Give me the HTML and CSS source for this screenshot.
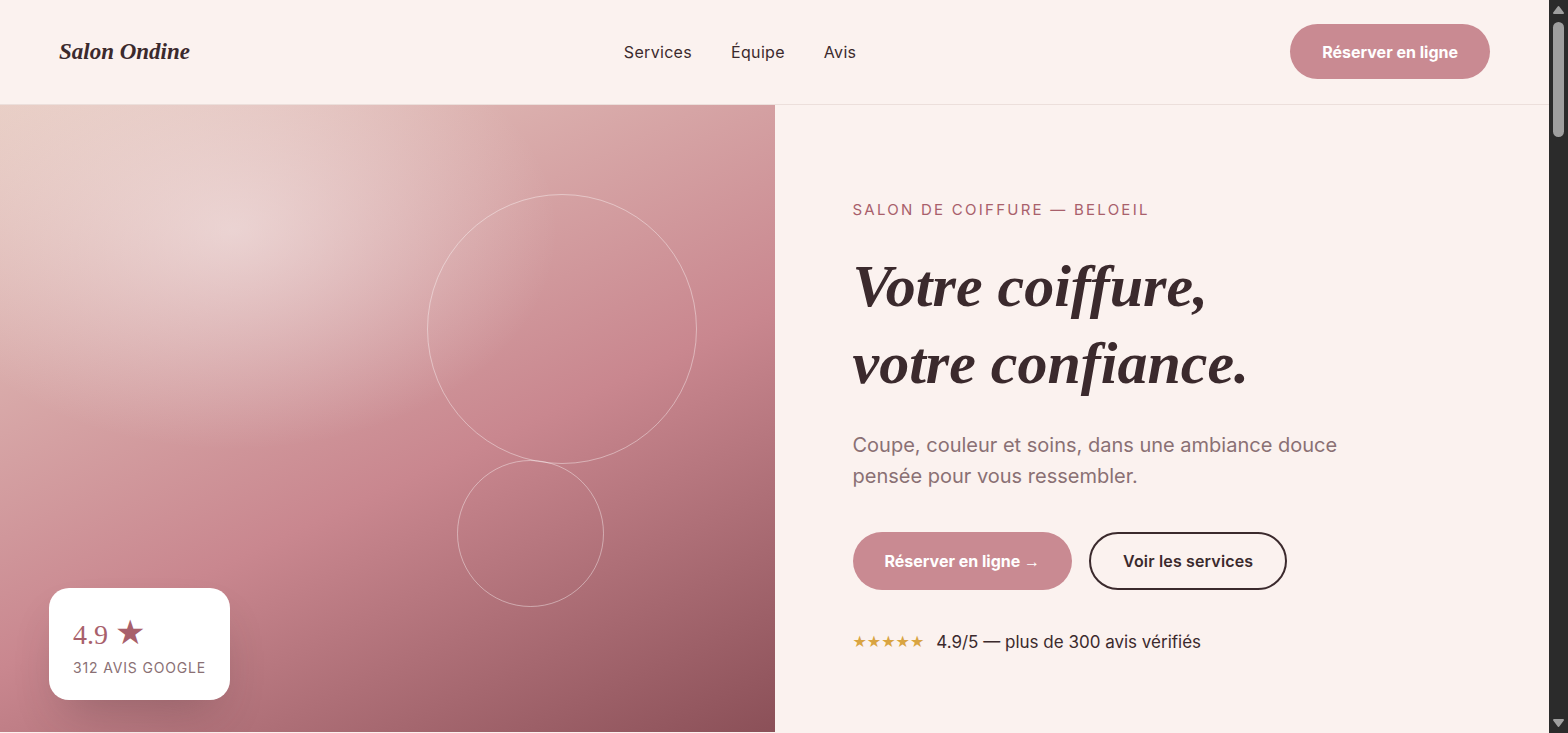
FILE: index.html
```html
<!DOCTYPE html>
<html lang="fr">
<head>
    <meta charset="UTF-8">
    <meta name="viewport" content="width=device-width, initial-scale=1.0">
    <title>Salon Ondine</title>
    <link rel="stylesheet" href="styles.css">
</head>
<body>

    <div class="page">
        <header class="header">
            <a href="#" class="logo">Salon Ondine</a>
            <nav class="nav">
                <a href="#services">Services</a>
                <a href="#equipe">Équipe</a>
                <a href="#avis">Avis</a>
            </nav>
            <button class="btn btn-primary btn-header">Réserver en ligne</button>
        </header>

        <main class="hero">
            <div class="visual">
                <span class="circle circle-big"></span>
                <span class="circle circle-small"></span>
                <div class="badge">
                    <div class="badge-note">4.9 <span class="badge-star">★</span></div>
                    <div class="badge-label">312 avis Google</div>
                </div>
            </div>

            <div class="content">
                <p class="eyebrow">Salon de coiffure — Beloeil</p>
                <h1>Votre coiffure,<br>votre confiance.</h1>
                <p class="lead">Coupe, couleur et soins, dans une ambiance douce pensée pour vous ressembler.</p>
                <div class="actions">
                    <button class="btn btn-primary">Réserver en ligne <span class="arrow">→</span></button>
                    <button class="btn btn-outline">Voir les services</button>
                </div>
                <div class="rating">
                    <span class="stars">★★★★★</span>
                    <span>4.9/5 — plus de 300 avis vérifiés</span>
                </div>
            </div>
        </main>
    </div>

    <div class="scrollbar">
        <svg width="13" height="10" viewBox="0 0 13 10"><path d="M6.5 2 11 8H2Z"/></svg>
        <div class="thumb"></div>
        <svg class="down" width="13" height="10" viewBox="0 0 13 10"><path d="M6.5 8 2 2H11Z"/></svg>
    </div>

</body>
</html>
```
FILE: styles.css
```css
* {
    box-sizing: border-box;
}
body {
    margin: 0;
    display: flex;
    min-height: 100vh;
    font-family: Inter, "Liberation Sans", sans-serif;
    font-size: 16px;
    color: #3b2a2d;
    background: #fbf2ef;
}
.page {
    flex: 1;
    display: flex;
    flex-direction: column;
}

/* Header */
.header {
    display: flex;
    justify-content: space-between;
    align-items: center;
    height: 105px;
    padding: 0 59px 1px;
    border-bottom: 1px solid #ecdfdb;
}
.logo {
    font-family: "Liberation Serif", serif;
    font-size: 23px;
    font-style: italic;
    font-weight: bold;
    color: #3b2a2d;
    text-decoration: none;
}
.nav {
    display: flex;
    gap: 39px;
}
.nav a {
    color: #3b2a2d;
    text-decoration: none;
    letter-spacing: 0.02em;
}

/* Buttons */
.btn {
    height: 58px;
    padding: 0 32px;
    border: none;
    border-radius: 29px;
    font-family: inherit;
    font-size: 16px;
    font-weight: 600;
    cursor: pointer;
}
.btn-primary {
    background: #c98a92;
    color: #fff;
    font-weight: 700;
}
.btn-header {
    height: 55px;
}
.btn-outline {
    background: none;
    border: 2px solid #3b2a2d;
    color: #3b2a2d;
    letter-spacing: 0.01em;
}
.arrow {
    font-family: "Liberation Serif", serif;
    font-weight: normal;
}

/* Hero */
.hero {
    flex: 1;
    display: grid;
    grid-template-columns: 1fr 1fr;
    margin-bottom: 1px;
}
.visual {
    position: relative;
    background:
        radial-gradient(ellipse 60% 50% at 30% 20%, rgba(250, 246, 246, 0.5), rgba(250, 246, 246, 0) 70%),
        linear-gradient(155deg, #e8cdc4 0%, #c9878f 57%, #8b5058 100%);
}
.circle {
    position: absolute;
    border: 1px solid rgba(255, 255, 255, 0.4);
    border-radius: 50%;
}
.circle-big {
    width: 270px;
    height: 270px;
    top: 89px;
    right: 10%;
}
.circle-small {
    width: 147px;
    height: 147px;
    right: 22%;
    bottom: 20%;
}
.badge {
    position: absolute;
    left: 49px;
    bottom: 32px;
    padding: 24px;
    border-radius: 20px;
    background: #fff;
    box-shadow: 0 24px 48px -16px rgba(59, 42, 45, 0.3);
}
.badge-note {
    font-family: "Liberation Serif", serif;
    font-size: 28px;
    line-height: 40px;
    color: #a8606b;
}
.badge-star {
    font-family: "DejaVu Sans", sans-serif;
    font-size: 34px;
}
.badge-label {
    margin-top: 5px;
    font-size: 14px;
    line-height: 16px;
    letter-spacing: 0.06em;
    text-transform: uppercase;
    color: #8a7074;
}

/* Text column */
.content {
    display: flex;
    flex-direction: column;
    justify-content: center;
    align-items: flex-start;
    padding: 16px 78px 0;
}
.eyebrow {
    margin: 0 0 28px;
    font-size: 15px;
    line-height: 20px;
    letter-spacing: 0.15em;
    text-transform: uppercase;
    color: #a8606b;
}
h1 {
    margin: 0 0 28px;
    font-family: "Liberation Serif", serif;
    font-size: 60px;
    font-style: italic;
    line-height: 77px;
}
.lead {
    max-width: 510px;
    margin: 0 0 40px;
    font-size: 20px;
    line-height: 31px;
    color: #8a7074;
}
.actions {
    display: flex;
    gap: 17px;
    margin-bottom: 40px;
}
.rating {
    display: flex;
    align-items: center;
    gap: 12px;
    font-size: 17px;
    line-height: 24px;
}
.stars {
    font-family: "DejaVu Sans", sans-serif;
    font-size: 16px;
    color: #d9a441;
}

/* Scrollbar */
.scrollbar {
    display: flex;
    flex-direction: column;
    align-items: center;
    width: 19px;
    padding: 5px 0;
    background: #2b2b2b;
}
.scrollbar svg {
    fill: #9f9f9f;
    stroke: #9f9f9f;
    stroke-width: 2;
    stroke-linejoin: round;
}
.scrollbar .down {
    margin-top: auto;
}
.thumb {
    width: 11px;
    height: 115px;
    margin-top: 7px;
    border-radius: 6px;
    background: #9f9f9f;
}
```
